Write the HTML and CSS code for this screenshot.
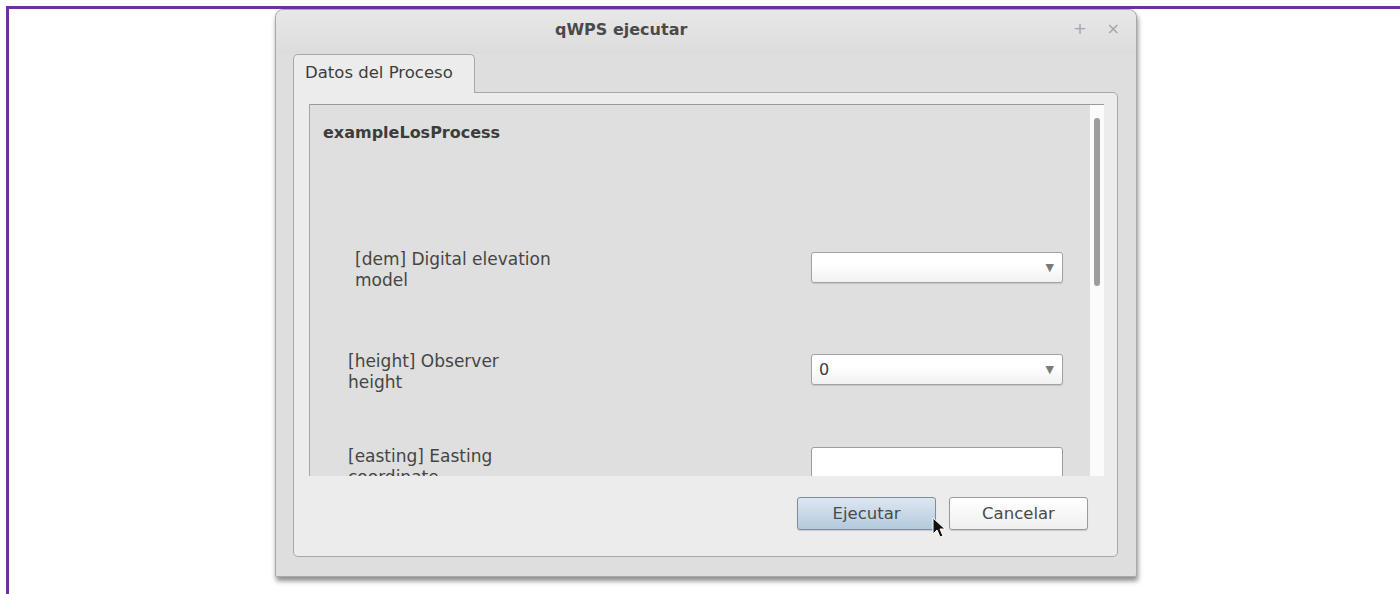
FILE: index.html
```html
<!DOCTYPE html>
<html lang="es">
<head>
<meta charset="utf-8">
<title>qWPS ejecutar</title>
<link rel="stylesheet" href="styles.css">
</head>
<body>
<div class="frame">
  <div class="window">
    <div class="titlebar">
      <span class="title">qWPS ejecutar</span>
      <span class="controls"><span class="ctl">+</span><span class="ctl">×</span></span>
    </div>
    <div class="body">
      <div class="tabs">
        <div class="tab">Datos del Proceso</div>
      </div>
      <div class="pane">
        <div class="scroll">
          <div class="content">
            <div class="proc">exampleLosProcess</div>
            <div class="row row-dem">
              <div class="label label-indent">[dem] Digital elevation<br>model</div>
              <div class="combo"><span class="value"></span><span class="arrow">▼</span></div>
            </div>
            <div class="row row-height">
              <div class="label">[height] Observer<br>height</div>
              <div class="combo"><span class="value">0</span><span class="arrow">▼</span></div>
            </div>
            <div class="row row-easting">
              <div class="label">[easting] Easting<br>coordinate</div>
              <div class="edit"></div>
            </div>
          </div>
          <div class="vbar"><div class="thumb"></div></div>
        </div>
        <div class="buttons">
          <button class="btn btn-default">Ejecutar</button>
          <button class="btn">Cancelar</button>
        </div>
      </div>
    </div>
    <svg class="cursor" width="14" height="22" viewBox="0 0 14 22">
      <path d="M1 1 L1 17 L5 13 L8 20 L11 19 L8 12 L13 12 Z" fill="#111" stroke="#fff" stroke-width="1"/>
    </svg>
  </div>
</div>
</body>
</html>
```

FILE: styles.css
```css
html, body {
  margin: 0;
  padding: 0;
  background: #ffffff;
}

body {
  font-family: "DejaVu Sans", "Open Sans", sans-serif;
  color: #3c3c3c;
}

.frame {
  margin: 6px 0 0 6px;
  height: 588px;
  border-top: 3px solid #7030a0;
  border-left: 3px solid #7030a0;
  box-sizing: border-box;
  padding-left: 266px;
}

.window {
  position: relative;
  width: 862px;
  height: 568px;
  box-sizing: border-box;
  border: 1px solid #a9a9a9;
  border-radius: 8px 8px 2px 2px;
  background: #dedede;
  box-shadow: 1px 4px 5px rgba(0, 0, 0, 0.45);
  display: flex;
  flex-direction: column;
}

/* title sits left of centre, with the window buttons at the far right */
.titlebar {
  height: 44px;
  flex: none;
  display: flex;
  align-items: center;
  padding-left: 279px;
  position: relative;
  border-radius: 8px 8px 0 0;
  background: linear-gradient(#e8e8e8, #dcdcdc);
}

.title {
  font-weight: bold;
  font-size: 16px;
  line-height: 20px;
  color: #4a4a4a;
  margin-top: -5px;
}

.controls {
  position: absolute;
  right: 16px;
  top: 9px;
  display: flex;
  gap: 20px;
  color: #a6a6a6;
  font-size: 16px;
}

.body {
  flex: 1;
  padding: 0 18px 19px 17px;
  display: flex;
  flex-direction: column;
}

.tabs {
  display: flex;
  height: 38px;
  flex: none;
}

.tab {
  width: 182px;
  box-sizing: border-box;
  border: 1px solid #a8a8a8;
  border-bottom: none;
  border-radius: 5px 5px 0 0;
  background: #ececec;
  font-size: 16.5px;
  line-height: 20px;
  padding: 8px 0 0 11px;
  position: relative;
  z-index: 1;
  height: 39px;
  white-space: nowrap;
}

.pane {
  flex: 1;
  border: 1px solid #a8a8a8;
  border-radius: 0 5px 5px 5px;
  background: #ececec;
  padding: 11px 13px 0 15px;
  display: flex;
  flex-direction: column;
}

.scroll {
  height: 371px;
  display: flex;
  border-top: 1px solid #9a9a9a;
  border-left: 1px solid #a6a6a6;
  background: #dfdfdf;
  overflow: hidden;
}

.content {
  flex: 1;
  padding: 18px 0 0 13px;
  position: relative;
}

.proc {
  font-weight: bold;
  font-size: 16px;
  line-height: 20px;
  color: #3c3c3c;
}

.row {
  display: flex;
  align-items: center;
  height: 42px;
}

.row-dem { margin-top: 103px; }
.row-height { margin-top: 60px; }
.row-easting { margin-top: 53px; }

.label {
  width: 463px;
  padding: 5px 0 0 25px;
  font-size: 17px;
  line-height: 21px;
  color: #454545;
  white-space: nowrap;
}

.label-indent {
  padding-left: 32px;
  width: 456px;
}

.combo {
  width: 252px;
  height: 31px;
  box-sizing: border-box;
  border: 1px solid #a2a2a2;
  border-radius: 3px;
  background: linear-gradient(#ffffff 40%, #f1f1f1);
  display: flex;
  align-items: center;
  justify-content: space-between;
  padding: 0 8px 0 7px;
  box-shadow: 0 1px 1px rgba(0, 0, 0, 0.12);
}

.combo .value {
  font-size: 16px;
  color: #3c3c3c;
}

.arrow {
  font-size: 11px;
  color: #7a7a7a;
}

.edit {
  width: 252px;
  height: 31px;
  box-sizing: border-box;
  border: 1px solid #9c9c9c;
  border-radius: 3px;
  background: #ffffff;
  margin-top: -4px;
}

.vbar {
  width: 14px;
  flex: none;
  background: #fbfbfb;
  padding-top: 13px;
  box-sizing: border-box;
  display: flex;
  justify-content: center;
}

.thumb {
  width: 6px;
  height: 168px;
  border-radius: 3px;
  background: #9d9d9d;
}

.buttons {
  display: flex;
  justify-content: flex-end;
  gap: 13px;
  padding: 21px 16px 0 0;
}

.btn {
  width: 139px;
  height: 33px;
  box-sizing: border-box;
  border: 1px solid #9a9a9a;
  border-radius: 3px;
  background: linear-gradient(#ffffff, #efefef);
  font-family: "DejaVu Sans", "Open Sans", sans-serif;
  font-size: 16.5px;
  color: #4a4a4a;
  box-shadow: 0 1px 1px rgba(0, 0, 0, 0.15);
}

.btn-default {
  border-color: #7f8c99;
  background: linear-gradient(#dde7f1, #b4c9de);
}

.cursor {
  position: absolute;
  left: 656px;
  top: 507px;
}
```
